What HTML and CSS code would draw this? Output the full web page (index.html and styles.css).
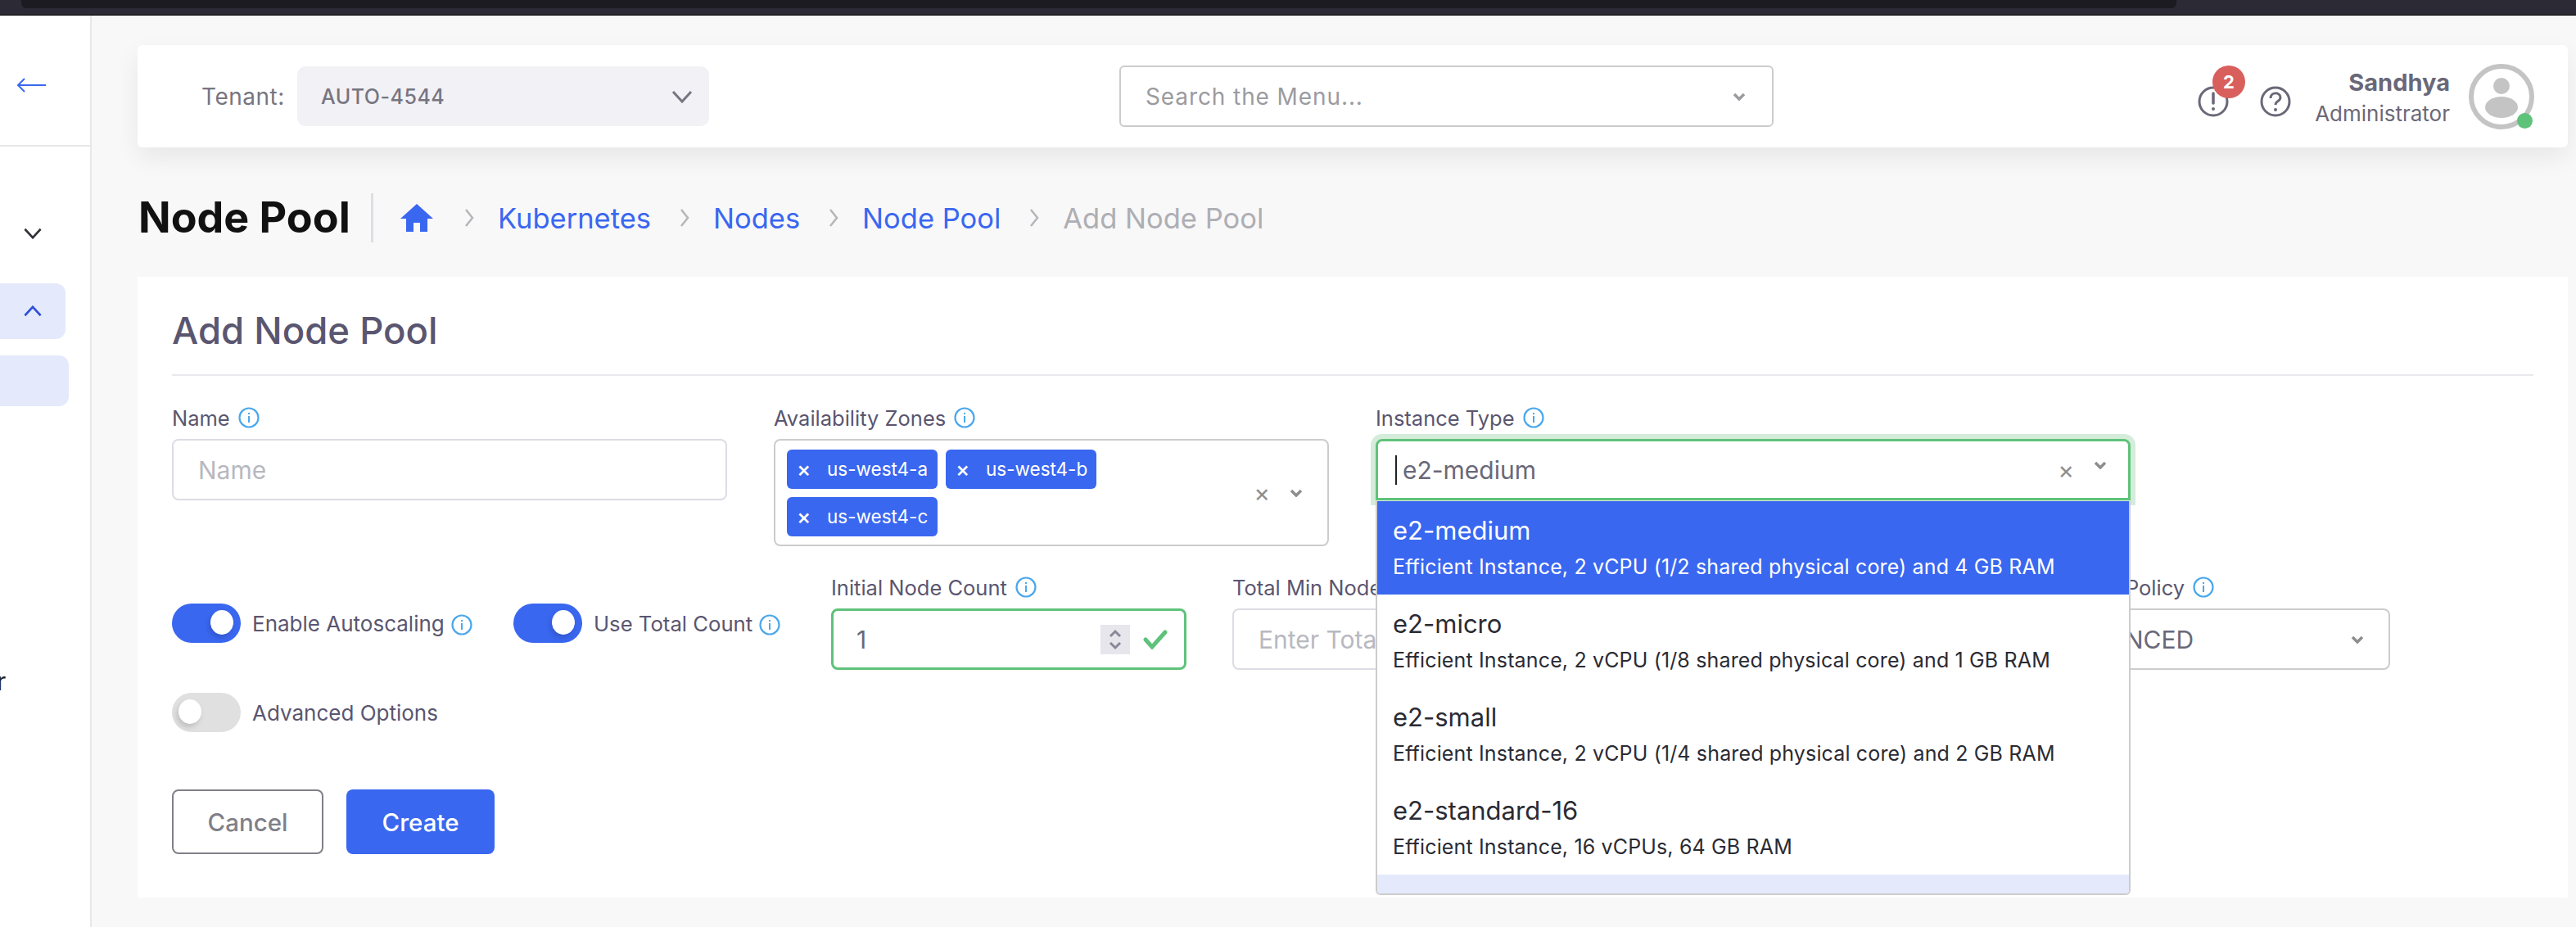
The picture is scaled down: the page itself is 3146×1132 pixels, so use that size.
FILE: index.html
```html
<!DOCTYPE html>
<html lang="en">
<head>
    <meta charset="UTF-8">
    <title>Add Node Pool</title>
    <link rel="stylesheet" href="styles.css">
</head>
<body>
    <svg class="defs" width="0" height="0">
        <symbol id="info" viewBox="0 0 26 26">
            <circle cx="13" cy="13" r="11.5" fill="none" stroke="#4aa8ec" stroke-width="2.2"/>
            <rect x="12" y="11" width="2" height="8" fill="#4aa8ec"/>
            <rect x="12" y="7" width="2" height="2" fill="#4aa8ec"/>
        </symbol>
        <symbol id="chev" viewBox="0 0 16 10">
            <path d="M2 2l6 6 6-6" fill="none" stroke="currentColor" stroke-width="3.5"/>
        </symbol>
        <symbol id="thin" viewBox="0 0 26 16">
            <path d="M2 2l11 12L24 2" fill="none" stroke="currentColor" stroke-width="3"/>
        </symbol>
        <symbol id="crumb" viewBox="0 0 12 24">
            <path d="M2 2l8 10-8 10" fill="none" stroke="#b5b5ba" stroke-width="2.5"/>
        </symbol>
    </svg>

    <div class="topstrip"><div class="tabbar"></div></div>

    <div class="app">
        <div class="sidebar">
            <div class="side-top">
                <svg class="back" width="36" height="20" viewBox="0 0 36 20"><path d="M36 10H2M10 2l-8 8 8 8" fill="none" stroke="#3a67f0" stroke-width="2"/></svg>
            </div>
            <div class="side-row"><svg class="side-chev" width="24" height="14"><use href="#thin"/></svg></div>
            <div class="side-active"><svg class="side-up" width="24" height="14"><use href="#thin"/></svg></div>
            <div class="side-sub"></div>
            <div class="side-cut">r</div>
        </div>

        <div class="main">
            <div class="header">
                <div class="tenant">
                    <span class="tenant-label">Tenant:</span>
                    <div class="tenant-select">
                        <span>AUTO-4544</span>
                        <svg width="26" height="16"><use href="#thin"/></svg>
                    </div>
                </div>
                <div class="menu-search">
                    <span>Search the Menu...</span>
                    <svg width="16" height="10"><use href="#chev"/></svg>
                </div>
                <div class="user">
                    <div class="alert">
                        <svg width="38" height="38" viewBox="0 0 38 38"><circle cx="19" cy="19" r="17" fill="none" stroke="#6a6878" stroke-width="3"/><path d="M19 9v12" stroke="#6a6878" stroke-width="3.5" stroke-linecap="round"/><circle cx="19" cy="28" r="2" fill="#6a6878"/></svg>
                        <span class="badge">2</span>
                    </div>
                    <svg class="help" width="38" height="38" viewBox="0 0 38 38"><circle cx="19" cy="19" r="17" fill="none" stroke="#6a6878" stroke-width="3"/><path d="M13 15c0-8 12-8 12-1 0 5-6 4-6 9" fill="none" stroke="#6a6878" stroke-width="3"/><circle cx="19" cy="29" r="2" fill="#6a6878"/></svg>
                    <div class="user-text">
                        <div class="user-name">Sandhya</div>
                        <div class="user-role">Administrator</div>
                    </div>
                    <div class="avatar">
                        <svg width="80" height="80" viewBox="0 0 80 80"><circle cx="40" cy="40" r="37" fill="none" stroke="#c4c4c4" stroke-width="6"/><circle cx="40" cy="27" r="10" fill="#c4c4c4"/><ellipse cx="40" cy="53" rx="20" ry="13" fill="#c4c4c4"/></svg>
                        <span class="online"></span>
                    </div>
                </div>
            </div>

            <div class="crumbs">
                <h1>Node Pool</h1>
                <svg class="home" width="40" height="34" viewBox="0 0 40 34"><path d="M20 0L40 18H33V34H24V23H16V34H7V18H0z" fill="#3a67f0"/></svg>
                <svg class="sep" width="12" height="24"><use href="#crumb"/></svg>
                <a>Kubernetes</a>
                <svg class="sep" width="12" height="24"><use href="#crumb"/></svg>
                <a>Nodes</a>
                <svg class="sep" width="12" height="24"><use href="#crumb"/></svg>
                <a>Node Pool</a>
                <svg class="sep" width="12" height="24"><use href="#crumb"/></svg>
                <span>Add Node Pool</span>
            </div>

            <div class="card">
                <h2>Add Node Pool</h2>

                <div class="row-one">
                    <div class="field wide">
                        <label>Name <svg width="26" height="26"><use href="#info"/></svg></label>
                        <div class="input"><span class="ph">Name</span></div>
                    </div>
                    <div class="field wide">
                        <label>Availability Zones <svg width="26" height="26"><use href="#info"/></svg></label>
                        <div class="input zones">
                            <div class="tags">
                                <span class="tag"><b>×</b>us-west4-a</span>
                                <span class="tag"><b>×</b>us-west4-b</span>
                                <span class="tag"><b>×</b>us-west4-c</span>
                            </div>
                            <span class="clear">×</span>
                            <svg class="grey" width="16" height="10"><use href="#chev"/></svg>
                        </div>
                    </div>
                    <div class="field instance">
                        <label>Instance Type <svg width="26" height="26"><use href="#info"/></svg></label>
                        <div class="input focused">
                            <span class="caret"></span><span class="val">e2-medium</span>
                            <span class="clear right">×</span>
                            <svg class="grey raised" width="16" height="10"><use href="#chev"/></svg>
                        </div>
                        <div class="dropdown">
                            <div class="opt selected"><div class="opt-name">e2-medium</div><div class="opt-desc">Efficient Instance, 2 vCPU (1/2 shared physical core) and 4 GB RAM</div></div>
                            <div class="opt"><div class="opt-name">e2-micro</div><div class="opt-desc">Efficient Instance, 2 vCPU (1/8 shared physical core) and 1 GB RAM</div></div>
                            <div class="opt"><div class="opt-name">e2-small</div><div class="opt-desc">Efficient Instance, 2 vCPU (1/4 shared physical core) and 2 GB RAM</div></div>
                            <div class="opt"><div class="opt-name">e2-standard-16</div><div class="opt-desc">Efficient Instance, 16 vCPUs, 64 GB RAM</div></div>
                            <div class="opt-next"></div>
                        </div>
                    </div>
                </div>

                <div class="row-two">
                    <div class="toggle-item first">
                        <span class="toggle on"><i></i></span>
                        <span>Enable Autoscaling</span>
                        <svg width="26" height="26"><use href="#info"/></svg>
                    </div>
                    <div class="toggle-item second">
                        <span class="toggle on"><i></i></span>
                        <span>Use Total Count</span>
                        <svg width="26" height="26"><use href="#info"/></svg>
                    </div>
                    <div class="field count">
                        <label>Initial Node Count <svg width="26" height="26"><use href="#info"/></svg></label>
                        <div class="input valid">
                            <span class="val">1</span>
                            <span class="spin">
                                <svg width="18" height="12" viewBox="0 0 18 12"><path d="M3 9l6-6 6 6" fill="none" stroke="#8a8898" stroke-width="3"/></svg>
                                <svg width="18" height="12" viewBox="0 0 18 12"><path d="M3 3l6 6 6-6" fill="none" stroke="#8a8898" stroke-width="3"/></svg>
                            </span>
                            <svg class="check" width="30" height="24" viewBox="0 0 30 24"><path d="M3 12l8 9L27 3" fill="none" stroke="#5fc27a" stroke-width="5" stroke-linecap="round"/></svg>
                        </div>
                    </div>
                    <div class="field count">
                        <label>Total Min Nodes</label>
                        <div class="input"><span class="ph">Enter Total Min Nodes</span></div>
                    </div>
                    <div class="field count">
                        <label>Total Max Nodes</label>
                        <div class="input"><span class="ph">Enter Total Max Nodes</span></div>
                    </div>
                    <div class="field count">
                        <label>Location Policy <svg width="26" height="26"><use href="#info"/></svg></label>
                        <div class="input policy">
                            <span class="val">BALANCED</span>
                            <svg class="grey" width="16" height="10"><use href="#chev"/></svg>
                        </div>
                    </div>
                </div>

                <div class="toggle-item advanced">
                    <span class="toggle"><i></i></span>
                    <span>Advanced Options</span>
                </div>

                <div class="buttons">
                    <button class="btn-cancel">Cancel</button>
                    <button class="btn-create">Create</button>
                </div>
            </div>
        </div>
    </div>
</body>
</html>
```

FILE: styles.css
```css
*{
    box-sizing: border-box;
}
html, body{
    margin: 0;
    height: 1132px;
    overflow: hidden;
}
body{
    background-color: #f8f8f8;
    font-family: 'Inter', 'Liberation Sans', sans-serif;
    color: #5a5670;
}
.defs{
    position: absolute;
}
h1, h2{
    margin: 0;
}

/* browser strip */
.topstrip{
    height: 19px;
    background-color: #2b2a35;
    border-bottom: 1px solid #000;
    padding-left: 26px;
    padding-right: 488px;
}
.tabbar{
    height: 10px;
    background-color: #1c1b22;
    border-radius: 0 0 6px 6px;
}
.app{
    display: flex;
    height: 1113px;
}

/* sidebar */
.sidebar{
    width: 112px;
    flex-shrink: 0;
    background-color: #fff;
    border-right: 2px solid #e8e8e8;
}
.side-top{
    height: 160px;
    border-bottom: 2px solid #e8e8e8;
    padding: 75px 0 0 20px;
}
.back{
    display: block;
}
.side-row{
    padding: 99px 0 0 28px;
    box-sizing: content-box;
    height: 14px;
    color: #33333a;
}
.side-chev, .side-up{
    display: block;
}
.side-active{
    width: 80px;
    height: 68px;
    margin-top: 54px;
    padding: 27px 0 0 28px;
    background-color: #e4eafb;
    border-radius: 0 12px 12px 0;
    color: #2f50d8;
}
.side-up{
    transform: rotate(180deg);
}
.side-sub{
    width: 84px;
    height: 62px;
    margin-top: 20px;
    background-color: #e4eafb;
    border-radius: 0 12px 12px 0;
}
.side-cut{
    margin: 318px 0 0 -4px;
    font-size: 30px;
    line-height: 36px;
    color: #222;
}

.main{
    flex: 1;
    padding: 36px 10px 0 56px;
}

/* top header */
.header{
    height: 125px;
    background-color: #fff;
    border-radius: 6px;
    box-shadow: 0 12px 30px rgba(0,0,0,.07);
    display: flex;
    align-items: center;
    position: relative;
    padding-left: 78px;
}
.tenant{
    display: flex;
    align-items: center;
    gap: 11px;
    width: 1121px;
    font-size: 28px;
    letter-spacing: .5px;
}
.tenant-label{
    width: 106px;
    color: #77757f;
}
.tenant-select{
    width: 503px;
    height: 73px;
    background-color: #f1f1f6;
    border-radius: 10px;
    display: flex;
    align-items: center;
    justify-content: space-between;
    padding: 0 20px 0 29px;
    font-size: 25px;
    font-weight: 500;
    color: #77757f;
}
.menu-search{
    width: 799px;
    height: 75px;
    border: 2px solid #ccc;
    border-radius: 6px;
    display: flex;
    align-items: center;
    justify-content: space-between;
    padding: 0 32px 0 30px;
    font-size: 28px;
    letter-spacing: .9px;
    color: #9b9b9f;
}
.user{
    margin-left: auto;
    display: flex;
    align-items: center;
    padding-right: 41px;
}
.alert{
    position: relative;
    width: 38px;
    height: 38px;
    margin-top: 12px;
}
.badge{
    position: absolute;
    top: -25px;
    left: 18px;
    width: 40px;
    height: 40px;
    border-radius: 50%;
    background-color: #d95f5d;
    color: #fff;
    font-size: 22px;
    font-weight: 700;
    text-align: center;
    line-height: 40px;
}
.help{
    margin: 12px 0 0 38px;
}
.user-text{
    width: 194px;
    margin-right: 23px;
    text-align: right;
    color: #6a6878;
}
.user-name{
    font-size: 29px;
    font-weight: 700;
    line-height: 42px;
}
.user-role{
    font-size: 26px;
    line-height: 34px;
}
.avatar{
    position: relative;
    width: 80px;
    height: 80px;
}
.avatar svg{
    display: block;
}
.online{
    position: absolute;
    right: 2px;
    bottom: 1px;
    width: 19px;
    height: 19px;
    border-radius: 50%;
    background-color: #5fc27a;
}

/* breadcrumb row */
.crumbs{
    height: 158px;
    display: flex;
    align-items: center;
    font-size: 34.5px;
    padding: 14px 0 0 1px;
}
.crumbs h1{
    font-size: 52px;
    font-weight: 700;
    color: #111;
    width: 287px;
    height: 60px;
    line-height: 60px;
    border-right: 3px solid #dcdfe3;
}
.home{
    margin: 0 3px 0 33px;
}
.sep{
    margin: 0 29px 0 35px;
}
.crumbs a{
    color: #3a67f0;
}
.crumbs span{
    color: #aeaeb4;
}

/* card */
.card{
    height: 758px;
    background-color: #fff;
    padding: 0 42px;
}
.card h2{
    height: 121px;
    padding-top: 44px;
    font-size: 45.5px;
    line-height: 44px;
    font-weight: 500;
    border-bottom: 2px solid #e9e9ee;
    color: #5a5670;
}
.row-one{
    display: flex;
    gap: 57px;
    margin-top: 35px;
    align-items: flex-start;
}
.field label{
    display: flex;
    align-items: center;
    gap: 10px;
    height: 28px;
    padding-top: 4px;
    margin-bottom: 14px;
    font-size: 25.5px;
    color: #5a5670;
    white-space: nowrap;
}
.wide{
    width: 678px;
}
.instance{
    position: relative;
    width: 922px;
}
.count{
    width: 434px;
}
.input{
    height: 75px;
    border: 2px solid #dcdce4;
    border-radius: 8px;
    display: flex;
    align-items: center;
    padding: 0 30px;
    font-size: 30px;
}
.ph{
    color: #b8b8c0;
    white-space: nowrap;
}
.val{
    color: #6a6878;
}

.zones{
    height: 131px;
    border-color: #ccc;
    padding: 0 30px 0 14px;
}
.tags{
    flex: 1;
    display: flex;
    flex-wrap: wrap;
    gap: 10px;
    max-width: 400px;
}
.tag{
    height: 48px;
    width: 184px;
    background-color: #3a67f0;
    color: #fff;
    border-radius: 6px;
    display: flex;
    align-items: center;
    padding-left: 12px;
    font-size: 22.5px;
    white-space: nowrap;
}
.tag b{
    width: 37px;
    font-size: 26px;
    font-weight: 500;
}
.clear{
    margin-left: auto;
    margin-right: 24px;
    font-size: 30px;
    color: #8e8e8e;
}
.grey{
    color: #8e8e8e;
}
.focused{
    border: 3px solid #5fc27a;
    border-radius: 8px 8px 0 0;
    box-shadow: 0 0 0 6px #d4ecd9;
    padding: 0 26px 0 21px;
    position: relative;
}
.caret{
    width: 2px;
    height: 36px;
    background-color: #222;
    margin-right: 7px;
}
.raised{
    margin-bottom: 12px;
}
.dropdown{
    position: absolute;
    z-index: 2;
    top: 118px;
    left: 0;
    width: 100%;
    height: 481px;
    background-color: #fff;
    border: 2px solid #ccc;
    border-top: 0;
    border-radius: 0 0 6px 6px;
    overflow: hidden;
}
.opt{
    height: 114px;
    padding: 17px 0 0 19px;
    color: #2b2b33;
}
.selected{
    background-color: #3a67f0;
    color: #fff;
}
.opt-name{
    font-size: 31px;
    line-height: 38px;
}
.opt-desc{
    margin-top: 6px;
    font-size: 25px;
    letter-spacing: .15px;
    line-height: 38px;
    white-space: nowrap;
}
.opt-next{
    height: 24px;
    background-color: #e4eafb;
}

.row-two{
    display: flex;
    align-items: flex-start;
    gap: 56px;
    margin-top: 34px;
}
.toggle-item{
    display: flex;
    align-items: center;
    gap: 14px;
    font-size: 25.7px;
    color: #5a5670;
    white-space: nowrap;
    height: 48px;
    flex-shrink: 0;
}
.row-two .toggle-item{
    margin-top: 36px;
}
.toggle-item svg{
    flex-shrink: 0;
    margin: 3px 0 0 -6px;
}
.first{
    width: 361px;
    font-size: 26px;
}
.second{
    width: 332px;
}
.toggle{
    position: relative;
    display: block;
    width: 84px;
    height: 48px;
    border-radius: 24px;
    background-color: #e0e0e0;
    flex-shrink: 0;
}
.toggle i{
    position: absolute;
    top: 8px;
    left: 8px;
    width: 28px;
    height: 30px;
    border-radius: 50%;
    background-color: #fff;
    box-shadow: -2px 4px 6px rgba(0,0,0,.15);
}
.on{
    background-color: #3a67f0;
}
.on i{
    left: 47px;
}
.valid{
    border: 3px solid #5fc27a;
    padding: 0 20px 0 28px;
}
.spin{
    margin-left: auto;
    width: 36px;
    height: 36px;
    background-color: #e6e6ec;
    display: flex;
    flex-direction: column;
    align-items: center;
    justify-content: center;
    gap: 2px;
}
.spin svg{
    display: block;
}
.check{
    margin-left: 16px;
}
.policy{
    border-color: #ccc;
    justify-content: space-between;
    padding-right: 30px;
}
.advanced{
    margin-top: 28px;
    font-size: 26px;
}
.buttons{
    display: flex;
    gap: 28px;
    margin-top: 70px;
}
.buttons button{
    height: 79px;
    border-radius: 8px;
    font-family: inherit;
    font-size: 29.5px;
    font-weight: 500;
}
.btn-cancel{
    width: 185px;
    background-color: #fff;
    border: 2px solid #808088;
    color: #808088;
}
.btn-create{
    width: 181px;
    background-color: #3a67f0;
    border: 0;
    color: #fff;
}
```
